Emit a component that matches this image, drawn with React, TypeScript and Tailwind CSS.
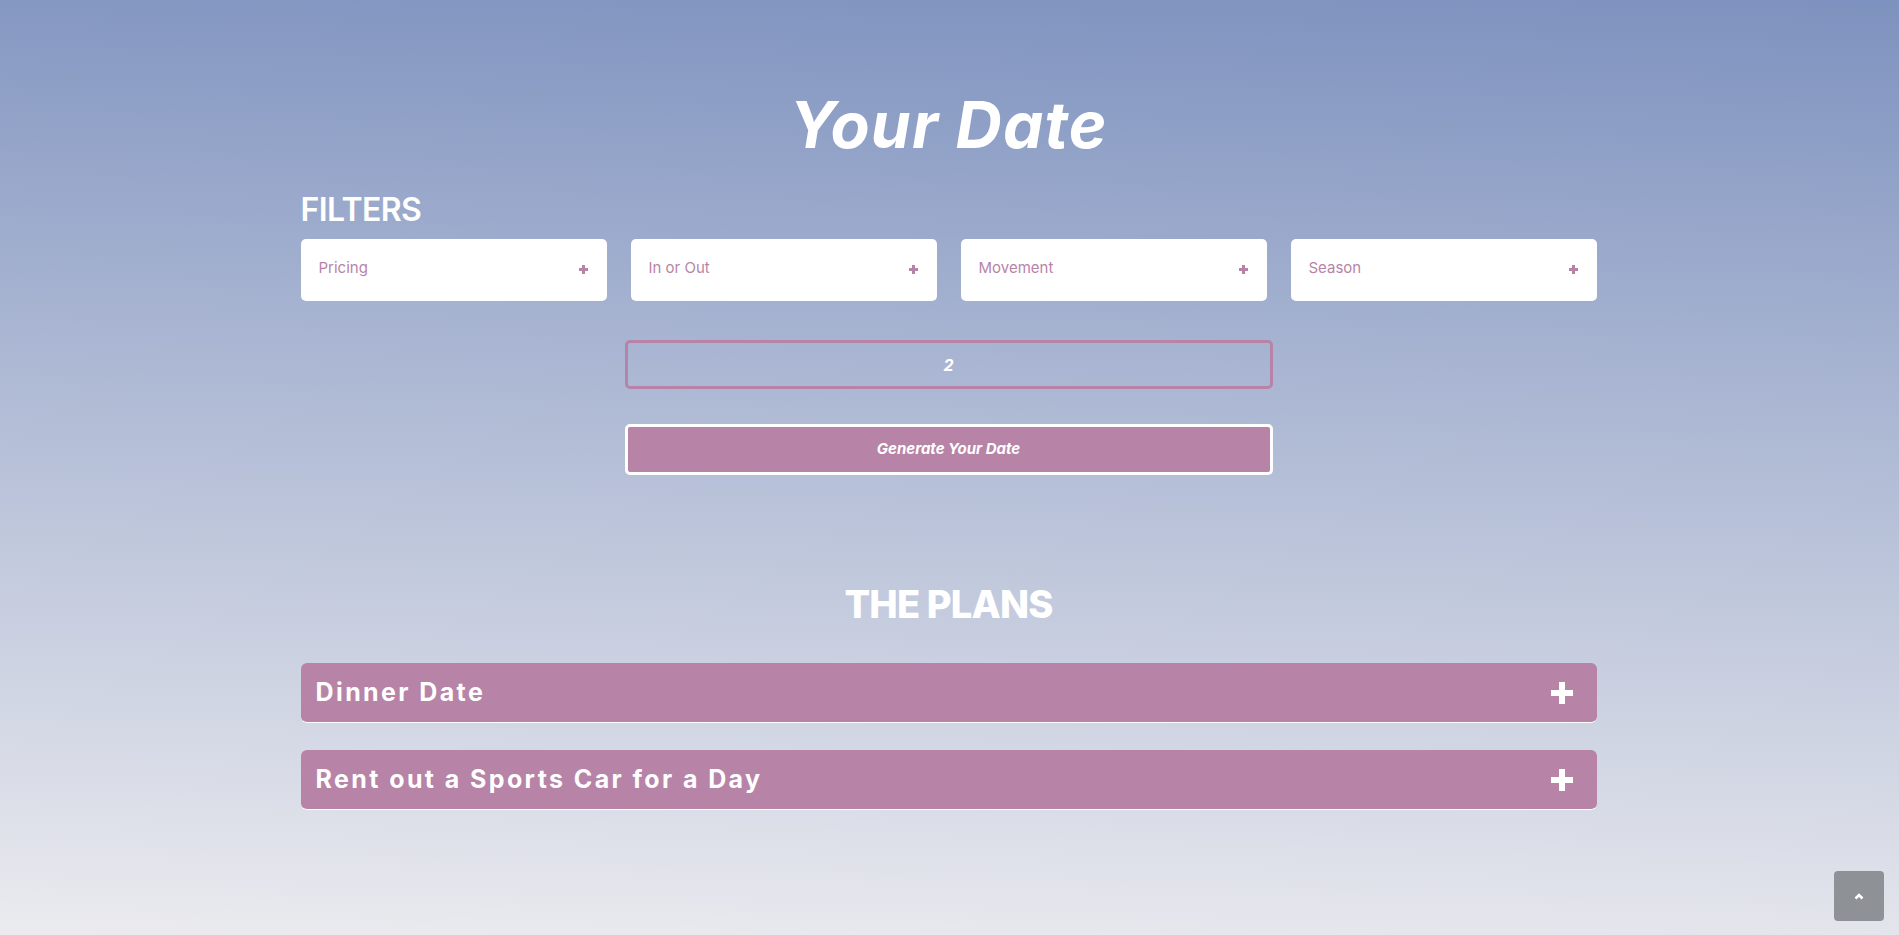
import React from "react";

const font = { fontFamily: "Inter, 'Noto Sans', 'Liberation Sans', sans-serif" };

function SmallPlus() {
  return (
    <svg width="9" height="9" viewBox="0 0 9 9" className="shrink-0">
      <rect x="3" y="0" width="3" height="9" fill="#b784a7" />
      <rect x="0" y="3" width="9" height="3" fill="#b784a7" />
    </svg>
  );
}

function BigPlus() {
  return (
    <svg width="22" height="22" viewBox="0 0 22 22" className="shrink-0">
      <rect x="8" y="0" width="6" height="22" fill="#ffffff" />
      <rect x="0" y="8" width="22" height="6" fill="#ffffff" />
    </svg>
  );
}

function FilterCard({ label }: { label: string }) {
  return (
    <div className="flex h-[62px] items-center justify-between rounded-[5px] bg-white pl-[18px] pr-[19px]">
      <span className="mb-[4px] text-[15px] text-[#b784a7]">{label}</span>
      <span className="mb-[2px]">
        <SmallPlus />
      </span>
    </div>
  );
}

function Plan({ title }: { title: string }) {
  return (
    <div className="flex h-[60px] items-center justify-between rounded-[6px] border-b border-white bg-[#b784a7] pl-[15px] pr-[24px]">
      <span className="text-[25px] font-bold leading-none tracking-[2.4px] text-white">{title}</span>
      <BigPlus />
    </div>
  );
}

export default function App() {
  return (
    <div
      style={font}
      className="relative min-h-[935px] w-full bg-[linear-gradient(182deg,#7e92bf_0%,#ebebef_100%)]"
    >
      <div className="mx-auto flex w-[1296px] -translate-x-[1px] flex-col pt-[93px]">
        <h1 className="text-center text-[64px] font-bold italic leading-none tracking-[1.2px] text-white">
          Your Date
        </h1>
        <h2 className="mt-[37px] text-[32px] font-semibold leading-none tracking-[-0.6px] text-white">
          FILTERS
        </h2>
        <div className="mt-[13px] grid grid-cols-4 gap-x-[24px]">
          <FilterCard label="Pricing" />
          <FilterCard label="In or Out" />
          <FilterCard label="Movement" />
          <FilterCard label="Season" />
        </div>
        <div className="mx-auto mt-[39px] flex h-[49px] w-[648px] items-center justify-center rounded-[5px] border-[3px] border-[#b784a7]">
          <span className="text-[16px] font-bold italic text-white">2</span>
        </div>
        <button className="mx-auto mt-[35px] flex h-[51px] w-[648px] items-center justify-center rounded-[5px] border-[3px] border-white bg-[#b784a7]">
          <span className="mb-[1px] text-[15px] font-bold italic text-white">Generate Your Date</span>
        </button>
        <h2 className="mt-[110px] text-center text-[38px] font-extrabold leading-none tracking-[-0.8px] text-white">
          THE PLANS
        </h2>
        <div className="mt-[40px] flex flex-col gap-[27px]">
          <Plan title="Dinner Date" />
          <Plan title="Rent out a Sports Car for a Day" />
        </div>
      </div>
      <button className="fixed bottom-[14px] right-[15px] flex h-[50px] w-[50px] items-center justify-center rounded-[4px] bg-[#8e9196]">
        <svg width="10" height="7" viewBox="0 0 10 7">
          <path d="M1.5 5.5 L5 2 L8.5 5.5" stroke="#ffffff" strokeWidth="2.6" fill="none" />
        </svg>
      </button>
    </div>
  );
}
